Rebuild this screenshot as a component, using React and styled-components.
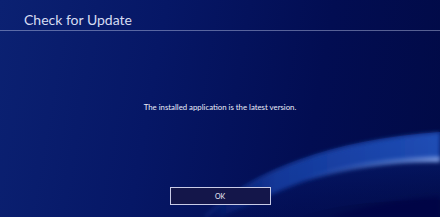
import React from 'react';
import styled, { createGlobalStyle } from 'styled-components';

const Global = createGlobalStyle`
  html, body { margin: 0; padding: 0; background: #000a44; }
  body { font-family: Lato, "Open Sans", sans-serif; }
`;

const Screen = styled.div`
  position: relative;
  width: 440px;
  height: 217px;
  overflow: hidden;
  background: linear-gradient(100deg, #0b2172 0%, #061766 35%, #020d52 70%, #010a46 100%);
  display: flex;
  flex-direction: column;
  color: #e6e9f5;
`;

const Wave = styled.svg`
  position: absolute;
  inset: 0;
  pointer-events: none;
`;

const Header = styled.header`
  position: relative;
  height: 31px;
  box-sizing: border-box;
  padding: 12px 0 0 24px;
  border-bottom: 1px solid rgba(190, 200, 235, 0.45);
`;

const Title = styled.h1`
  margin: 0;
  font-family: Lato, "Open Sans", sans-serif;
  font-size: 14px;
  font-weight: 400;
  line-height: 16px;
  color: #d6dcf2;
`;

const Body = styled.main`
  position: relative;
  flex: 1;
  display: flex;
  flex-direction: column;
  align-items: center;
  padding-top: 71px;
`;

const Message = styled.p`
  margin: 0;
  font-family: Lato, "Open Sans", sans-serif;
  font-size: 7.8px;
  line-height: 10px;
  color: #e9ecf8;
`;

const Button = styled.button`
  margin-top: 75px;
  width: 101px;
  height: 18px;
  box-sizing: border-box;
  border: 1.5px solid #c9cbe6;
  background: #14164a;
  color: #f0f0fa;
  font-family: Lato, "Open Sans", sans-serif;
  font-size: 7px;
  padding: 0;
  cursor: pointer;
`;

export default function App() {
  return (
    <>
      <Global />
      <Screen>
        <Wave viewBox="0 0 440 217" width="440" height="217">
          <defs>
            <linearGradient id="band" x1="0" y1="0" x2="1" y2="0">
              <stop offset="0" stopColor="#1a4fc0" stopOpacity="0" />
              <stop offset="0.3" stopColor="#1f55c8" stopOpacity="0.55" />
              <stop offset="1" stopColor="#2a63d6" stopOpacity="0.7" />
            </linearGradient>
            <linearGradient id="streak" x1="0" y1="0" x2="1" y2="0">
              <stop offset="0" stopColor="#6f9af0" stopOpacity="0" />
              <stop offset="0.5" stopColor="#7aa4f4" stopOpacity="0.45" />
              <stop offset="1" stopColor="#a9c4ff" stopOpacity="0.75" />
            </linearGradient>
            <linearGradient id="lower" x1="0" y1="0" x2="0" y2="1">
              <stop offset="0" stopColor="#0a2a8a" stopOpacity="0.6" />
              <stop offset="1" stopColor="#04115a" stopOpacity="0.2" />
            </linearGradient>
            <filter id="blur" x="-10%" y="-50%" width="120%" height="200%">
              <feGaussianBlur stdDeviation="2" />
            </filter>
          </defs>
          <path
            d="M200 217 C 250 170, 330 140, 440 132 L 440 200 C 380 200, 330 205, 300 217 Z"
            fill="url(#lower)"
          />
          <path
            d="M205 217 C 255 170, 335 141, 440 133 L 440 160 C 380 160, 320 170, 260 200 C 240 208, 228 213, 222 217 Z"
            fill="url(#band)"
            filter="url(#blur)"
          />
          <path
            d="M300 180 C 340 165, 390 158, 440 157 L 440 162 C 395 161, 350 168, 300 182 Z"
            fill="url(#streak)"
            filter="url(#blur)"
          />
          <path
            d="M205 217 C 255 170, 335 141, 440 133"
            stroke="#3d72e0"
            strokeOpacity="0.35"
            strokeWidth="1.5"
            fill="none"
            filter="url(#blur)"
          />
          <path
            d="M330 217 C 370 205, 405 198, 440 196 L 440 217 Z"
            fill="#020a44"
            fillOpacity="0.6"
            filter="url(#blur)"
          />
        </Wave>
        <Header>
          <Title>Check for Update</Title>
        </Header>
        <Body>
          <Message>The installed application is the latest version.</Message>
          <Button>OK</Button>
        </Body>
      </Screen>
    </>
  );
}
